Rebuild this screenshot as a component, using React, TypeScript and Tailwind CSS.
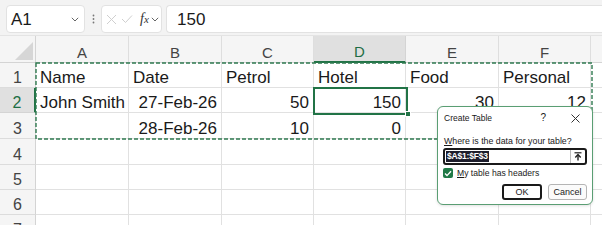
import React from "react";

const widths = ["w-[93px]", "w-[93px]", "w-[92px]", "w-[92px]", "w-[93px]", "w-[92px]"];
const letters = ["A", "B", "C", "D", "E", "F"];

type Cell = { t: string; r?: boolean };
const data: Cell[][] = [
  [{ t: "Name" }, { t: "Date" }, { t: "Petrol" }, { t: "Hotel" }, { t: "Food" }, { t: "Personal" }],
  [{ t: "John Smith" }, { t: "27-Feb-26", r: true }, { t: "50", r: true }, { t: "150", r: true }, { t: "30", r: true }, { t: "12", r: true }],
  [{ t: "" }, { t: "28-Feb-26", r: true }, { t: "10", r: true }, { t: "0", r: true }, { t: "" }, { t: "" }],
  [{ t: "" }, { t: "" }, { t: "" }, { t: "" }, { t: "" }, { t: "" }],
  [{ t: "" }, { t: "" }, { t: "" }, { t: "" }, { t: "" }, { t: "" }],
  [{ t: "" }, { t: "" }, { t: "" }, { t: "" }, { t: "" }, { t: "" }],
  [{ t: "" }, { t: "" }, { t: "" }, { t: "" }, { t: "" }, { t: "" }],
];
const heights = ["h-[25px]", "h-[25px]", "h-[26px]", "h-[26px]", "h-[25px]", "h-[25px]", "h-[25px]"];

function Chevron() {
  return (
    <svg width="8" height="5" viewBox="0 0 8 5">
      <path d="M0.8 0.8 L4 4 L7.2 0.8" fill="none" stroke="#666" strokeWidth="1" />
    </svg>
  );
}

export default function App() {
  return (
    <div className="relative w-[602px] h-[225px] overflow-hidden bg-white font-['Liberation_Sans',Arial,sans-serif] text-[#1a1a1a]">
      {/* formula bar */}
      <div className="h-[36px] bg-[#f3f3f3] flex items-start pt-[5px] pl-[6px] border-b border-[#e4e4e4]">
        <div className="w-[79px] h-[28px] bg-white border border-[#e2e2e2] rounded-[4px] flex items-center pl-[4px] pr-[5px]">
          <span className="text-[17px] leading-none text-[#1a1a1a]">A1</span>
          <span className="ml-auto flex"><Chevron /></span>
        </div>
        <div className="w-[16px] h-[28px] flex items-center justify-center">
          <svg width="3" height="10" viewBox="0 0 3 10">
            <circle cx="1.5" cy="1.5" r="0.9" fill="#777" />
            <circle cx="1.5" cy="5" r="0.9" fill="#777" />
            <circle cx="1.5" cy="8.5" r="0.9" fill="#777" />
          </svg>
        </div>
        <div className="w-[61px] h-[28px] bg-white border border-[#e2e2e2] rounded-[4px] flex items-center pl-[4px]">
          <svg width="11" height="11" viewBox="0 0 11 11">
            <path d="M1 1 L10 10 M10 1 L1 10" stroke="#cfcfcf" strokeWidth="1" />
          </svg>
          <svg className="ml-[4px]" width="12" height="10" viewBox="0 0 12 10">
            <path d="M1 5 L4.5 8.5 L11 1.5" fill="none" stroke="#cfcfcf" strokeWidth="1" />
          </svg>
          <span className="ml-[7px] font-['Liberation_Serif',serif] italic text-[#333] text-[14px] leading-none">
            f<span className="text-[11px]">x</span>
          </span>
          <span className="ml-[2px] flex"><Chevron /></span>
        </div>
        <div className="ml-[4px] flex-1 h-[28px] bg-white border border-[#e2e2e2] border-r-0 rounded-l-[4px] flex items-center pl-[10px]">
          <span className="text-[17px] leading-none text-[#1a1a1a]">150</span>
        </div>
      </div>

      {/* column headers */}
      <div className="flex h-[27px] bg-[#f5f5f5]">
        <div className="relative w-[36px] border-r border-b border-[#d4d4d4]">
          <svg className="absolute left-0 top-0" width="36" height="26" viewBox="0 0 36 26">
            <polygon points="33,6 33,24 15,24" fill="#d6d6d6" />
          </svg>
        </div>
        {letters.map((l, i) => (
          <div
            key={l}
            className={`${widths[i]} flex items-end justify-center leading-[18px] text-[15px] border-r ${
              l === "D"
                ? "bg-[#e0e0e0] text-[#1e6e45] border-r-[#d4d4d4] border-b-2 border-b-[#217346]"
                : "text-[#444] border-[#dedede] border-b border-b-[#d4d4d4]"
            }`}
          >
            {l}
          </div>
        ))}
        <div className="flex-1 border-b border-[#d4d4d4]" />
      </div>

      {/* rows */}
      {data.map((row, ri) => (
        <div key={ri} className={`flex ${heights[ri]}`}>
          <div
            className={`w-[36px] flex items-end justify-center leading-[19px] text-[16px] border-b ${
              ri === 1
                ? "bg-[#e0e0e0] text-[#1e6e45] border-b-[#d4d4d4] border-r-2 border-r-[#217346]"
                : "bg-[#f5f5f5] text-[#444] border-b-[#dcdcdc] border-r border-r-[#d4d4d4]"
            }`}
          >
            {ri + 1}
          </div>
          {row.map((c, ci) => (
            <div
              key={ci}
              className={`${widths[ci]} flex items-end leading-[19px] text-[17px] px-[4px] whitespace-nowrap overflow-hidden border-r border-b border-[#e1e1e1] ${
                c.r ? "justify-end" : "justify-start"
              }`}
            >
              {c.t}
            </div>
          ))}
          <div className="flex-1 border-b border-[#e1e1e1]" />
        </div>
      ))}

      {/* marching ants around A1:F3 */}
      <svg className="absolute left-[35px] top-[62px]" width="558" height="78" viewBox="0 0 558 78">
        <rect x="1" y="1" width="556" height="76" fill="none" stroke="#2f7a50" strokeWidth="1.4" strokeDasharray="4 2" />
      </svg>

      {/* active cell */}
      <div className="absolute left-[313px] top-[87px] w-[95px] h-[28px] border-2 border-[#217346]" />
      <div className="absolute left-[405px] top-[111px] w-[6px] h-[6px] bg-[#217346] border border-white" />

      {/* Create Table dialog */}
      <div className="absolute left-[437px] top-[106px] w-[156px] h-[99px] bg-white border border-[#5a9e73] rounded-[6px] px-[5px] pt-[4px] flex flex-col text-[#1a1a1a] shadow-[0_1px_3px_rgba(0,0,0,0.12)]">
        <div className="h-[14px] flex items-center pl-[1px]">
          <span className="text-[8.5px] leading-none">Create Table</span>
          <span className="ml-auto text-[10px] leading-none">?</span>
          <svg className="ml-[25px] mr-[7px]" width="9" height="9" viewBox="0 0 9 9">
            <path d="M0.5 0.5 L8.5 8.5 M8.5 0.5 L0.5 8.5" stroke="#333" strokeWidth="1" />
          </svg>
        </div>
        <div className="mt-[10px] h-[12px] flex items-center pl-[1px]">
          <span className="text-[8.8px] leading-none">
            <span className="underline">W</span>here is the data for your table?
          </span>
        </div>
        <div className="mt-[1px] h-[17px] border-2 border-[#1a1a1a] rounded-[3px] flex items-center pl-[1px]">
          <span className="bg-[#1d1d2b] text-white text-[8.5px] leading-[11px] px-[1px] font-bold tracking-[-0.2px]">
            $A$1:$F$3
          </span>
          <div className="ml-auto h-full w-[15px] border-l border-[#bdbdbd] flex items-center justify-center">
            <svg width="8" height="9" viewBox="0 0 8 9">
              <path d="M0.5 0.8 H7.5" stroke="#222" strokeWidth="1.2" />
              <path d="M4 8.5 V3" stroke="#222" strokeWidth="1.4" />
              <path d="M1.3 5.5 L4 2.6 L6.7 5.5" fill="none" stroke="#222" strokeWidth="1.4" />
            </svg>
          </div>
        </div>
        <div className="mt-[3px] h-[10px] flex items-center">
          <div className="w-[10px] h-[10px] rounded-[2px] bg-[#207a47] flex items-center justify-center">
            <svg width="8" height="7" viewBox="0 0 8 7">
              <path d="M1 3.6 L3 5.6 L7 1.2" fill="none" stroke="white" strokeWidth="1.4" />
            </svg>
          </div>
          <span className="ml-[4px] text-[8.6px] leading-none">
            <span className="underline">M</span>y table has headers
          </span>
        </div>
        <div className="mt-[6px] h-[16px] flex justify-end gap-[6px]">
          <div className="w-[40px] h-[16px] border-2 border-[#1a1a1a] rounded-[3px] flex items-center justify-center text-[9px] leading-none">
            OK
          </div>
          <div className="w-[39px] h-[16px] border border-[#b5b5b5] bg-[#fbfbfb] rounded-[3px] flex items-center justify-center text-[9px] leading-none">
            Cancel
          </div>
        </div>
      </div>
    </div>
  );
}
